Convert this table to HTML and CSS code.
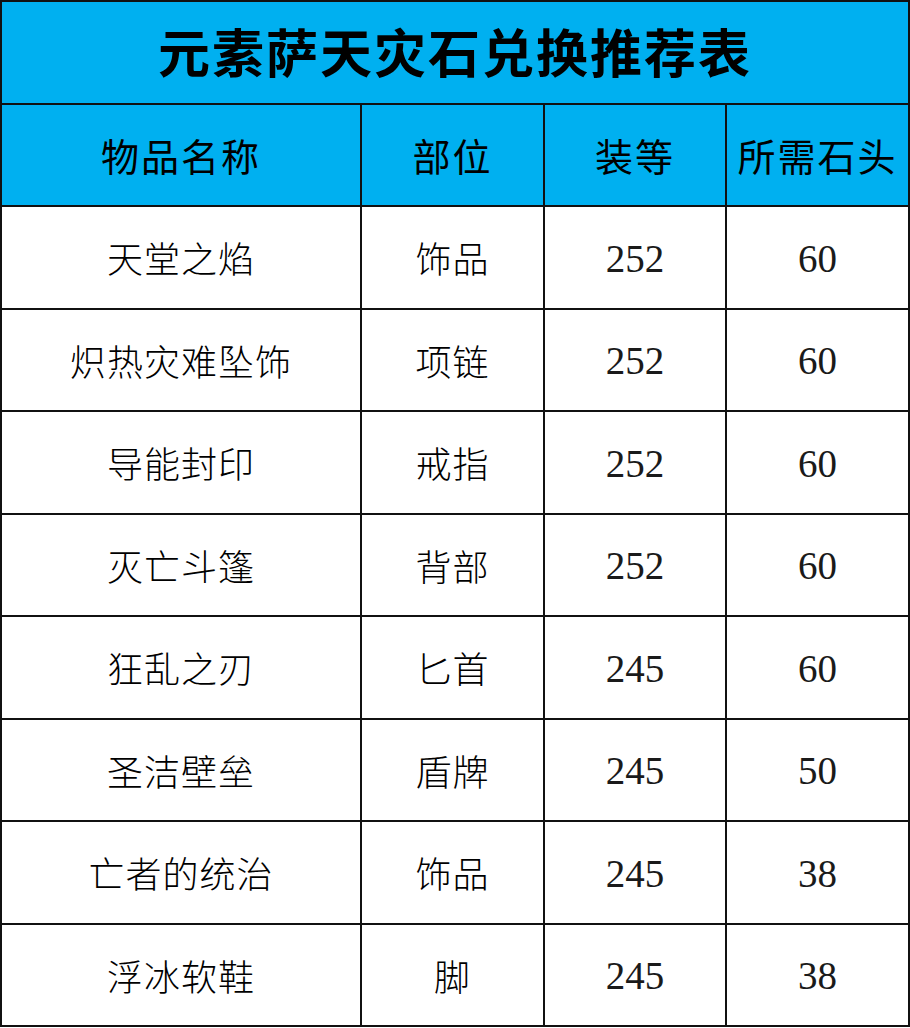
FILE: index.html
```html
<!DOCTYPE html>
<html lang="zh-CN">
<head>
<meta charset="utf-8">
<title>元素萨天灾石兑换推荐表</title>
<link rel="stylesheet" href="styles.css">
</head>
<body>
<div class="sheet">
  <div class="cell title">元素萨天灾石兑换推荐表</div>
  <div class="cell head">物品名称</div>
  <div class="cell head">部位</div>
  <div class="cell head">装等</div>
  <div class="cell head">所需石头</div>

  <div class="cell">天堂之焰</div><div class="cell">饰品</div><div class="cell num">252</div><div class="cell num">60</div>
  <div class="cell">炽热灾难坠饰</div><div class="cell">项链</div><div class="cell num">252</div><div class="cell num">60</div>
  <div class="cell">导能封印</div><div class="cell">戒指</div><div class="cell num">252</div><div class="cell num">60</div>
  <div class="cell">灭亡斗篷</div><div class="cell">背部</div><div class="cell num">252</div><div class="cell num">60</div>
  <div class="cell">狂乱之刃</div><div class="cell">匕首</div><div class="cell num">245</div><div class="cell num">60</div>
  <div class="cell">圣洁壁垒</div><div class="cell">盾牌</div><div class="cell num">245</div><div class="cell num">50</div>
  <div class="cell">亡者的统治</div><div class="cell">饰品</div><div class="cell num">245</div><div class="cell num">38</div>
  <div class="cell">浮冰软鞋</div><div class="cell">脚</div><div class="cell num">245</div><div class="cell num">38</div>
</div>
</body>
</html>
```
FILE: styles.css
```css
html, body {
  margin: 0;
  padding: 0;
  background: #ffffff;
}
.sheet {
  width: 910px;
  box-sizing: border-box;
  border: 2px solid #111;
  background: #111;
  display: grid;
  grid-template-columns: 358px 181px 180px 181px;
  grid-auto-rows: 100.5px;
  gap: 2px;
  font-family: "Liberation Serif", "Noto Sans CJK SC", serif;
  color: #000;
}
.cell {
  background: #fff;
  display: flex;
  align-items: center;
  justify-content: center;
  font-size: 36px;
  font-weight: 300;
  letter-spacing: 1px;
}
.num {
  font-size: 39px;
  letter-spacing: 0;
  color: #1a1a1a;
  padding-top: 2px;
}
.head {
  background: #00b0f0;
  font-size: 38px;
  font-weight: 400;
  letter-spacing: 2px;
}
.title {
  grid-column: 1 / -1;
  background: #00b0f0;
  font-size: 52px;
  font-weight: 700;
  letter-spacing: 2px;
  padding-bottom: 4px;
}
```
